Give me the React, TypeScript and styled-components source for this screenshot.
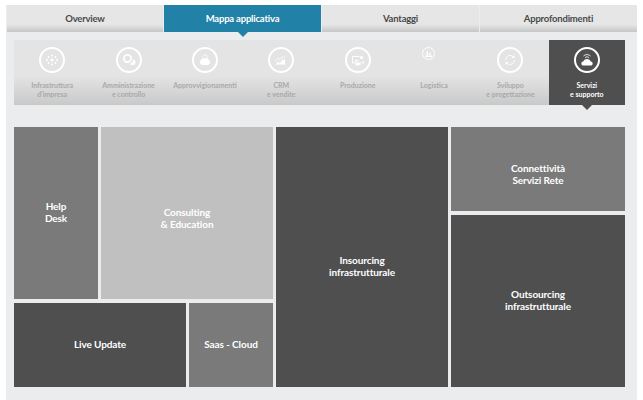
import React from 'react';
import styled, { createGlobalStyle } from 'styled-components';

const GlobalStyle = createGlobalStyle`
  html, body {
    margin: 0;
    padding: 0;
    background: #ffffff;
    font-family: Lato, "Noto Sans", sans-serif;
  }
  * {
    box-sizing: border-box;
  }
`;

const Page = styled.div`
  width: 643px;
  height: 400px;
  padding: 5px 6px 0 6px;
  overflow: hidden;
`;

const Panel = styled.div`
  background: #ebecee;
  height: 395px;
`;

const TabBar = styled.div`
  display: grid;
  grid-template-columns: 156px 157px 157px 1fr;
  gap: 1px;
  height: 27px;
  margin-left: 1px;
`;

const Tab = styled.div<{ $active?: boolean }>`
  position: relative;
  display: flex;
  align-items: center;
  justify-content: center;
  padding-bottom: 1px;
  font-size: 9.5px;
  letter-spacing: -0.2px;
  font-weight: 700;
  color: ${(p) => (p.$active ? '#ffffff' : '#4a4a4a')};
  background: ${(p) =>
    p.$active ? '#2281a6' : 'linear-gradient(#e6e6e6 0%, #e6e6e6 72%, #c6c6c6 100%)'};
`;

const Notch = styled.span<{ $color: string; $top: number }>`
  position: absolute;
  left: 50%;
  top: ${(p) => p.$top}px;
  margin-left: -5px;
  border-left: 5px solid transparent;
  border-right: 5px solid transparent;
  border-top: 5px solid ${(p) => p.$color};
`;

const IconBar = styled.div`
  display: grid;
  grid-template-columns: repeat(8, 1fr);
  margin: 8px 12px 0 8px;
  height: 65px;
  background: linear-gradient(#e4e4e4 0%, #e4e4e4 55%, #c9c9c9 100%);
`;

const Sector = styled.div<{ $active?: boolean }>`
  position: relative;
  display: flex;
  flex-direction: column;
  align-items: center;
  padding-top: 7px;
  background: ${(p) => (p.$active ? '#4f4f4f' : 'transparent')};
`;

const Ring = styled.div<{ $small?: boolean }>`
  display: flex;
  align-items: center;
  justify-content: center;
  flex: none;
  width: ${(p) => (p.$small ? 13 : 26)}px;
  height: ${(p) => (p.$small ? 13 : 26)}px;
  margin-bottom: ${(p) => (p.$small ? 13 : 0)}px;
  margin-right: ${(p) => (p.$small ? 12 : 0)}px;
  border: ${(p) => (p.$small ? 1 : 2)}px solid #ffffff;
  border-radius: 50%;
`;

const SectorLabel = styled.div<{ $active?: boolean }>`
  margin-top: 8px;
  font-size: 7px;
  line-height: 9px;
  font-weight: 700;
  text-align: center;
  white-space: nowrap;
  color: ${(p) => (p.$active ? '#ffffff' : '#a9a9a9')};
`;

const TreeMap = styled.div`
  display: grid;
  grid-template-columns: 84px 85px 84px 172px 174px;
  grid-template-rows: repeat(3, 84px);
  column-gap: 3px;
  row-gap: 4px;
  margin: 22px 0 0 8px;
  width: 611px;
  height: 260px;
`;

const tones = {
  dark: '#4f4f4f',
  mid: '#7a7a7a',
  light: '#c0c0c0',
};

const Tile = styled.div<{ $tone: keyof typeof tones; $col: string; $row: string; $drop: number }>`
  display: flex;
  align-items: center;
  justify-content: center;
  grid-column: ${(p) => p.$col};
  grid-row: ${(p) => p.$row};
  padding: ${(p) => p.$drop}px 4px 2px;
  background: ${(p) => tones[p.$tone]};
  color: #ffffff;
  font-size: 10px;
  letter-spacing: -0.1px;
  line-height: 12px;
  font-weight: 700;
  text-align: center;
`;

const Glyph = ({ children }: { children: React.ReactNode }) => (
  <svg width="14" height="14" viewBox="0 0 14 14" fill="#ffffff">
    {children}
  </svg>
);

const icons: Record<string, React.ReactNode> = {
  infra: (
    <Glyph>
      <circle cx="7" cy="7" r="1.6" />
      {[[7, 2.5], [3.5, 4], [10.5, 4], [2, 7], [12, 7], [3.5, 10], [10.5, 10], [7, 11.500]].map(([x, y]) => (
        <circle key={`${x}-${y}`} cx={x} cy={y} r="0.9" />
      ))}
    </Glyph>
  ),
  admin: (
    <Glyph>
      <path fillRule="evenodd" d="M5.500 1a4.500 4.500 0 1 1 0 9 4.500 4.500 0 0 1 0-9zm0 1.800a2.700 2.700 0 1 0 0 5.400 2.700 2.700 0 0 0 0-5.400z" />
      <path d="M11 6.500a2.800 2.800 0 0 1-.5 5.600c-1.200 0-2.200-.5-2.700-1.400 1.700-.2 3.200-1.700 3.200-4.200z" />
    </Glyph>
  ),
  supply: (
    <Glyph>
      <path d="M2 9.500C2 6.800 4.200 5 7 5s5 1.800 5 4.500c0 1.500-1.200 2.500-2.700 2.500H4.700C3.200 12 2 11 2 9.500z" />
      <path d="M4.500 5c0-2 1-3 2.500-3s2.500 1 2.500 3" fill="none" stroke="#ffffff" strokeWidth="0.8" />
    </Glyph>
  ),
  crm: (
    <Glyph>
      <path d="M1.500 11.500l2.500-3 2 1.500 2.500-3.500 1 1 1.500-2v6z" />
      <path d="M1.500 8l2.500-3 2 1.500 2.500-3 1.500 1 2-2" fill="none" stroke="#ffffff" strokeWidth="0.7" />
    </Glyph>
  ),
  production: (
    <Glyph>
      <path d="M1.500 3.500h7M1.500 3.500v6.500h11V7.500" fill="none" stroke="#ffffff" strokeWidth="0.9" />
      <path d="M5 10h4v1.500h1v.7H4v-.7h1z" />
      <circle cx="10.500" cy="4.500" r="1.600" />
      <path d="M3.500 8.500l1.500-2 1.500 1 1-1v2z" />
    </Glyph>
  ),
  logistics: (
    <svg width="9" height="9" viewBox="0 0 9 9" fill="#ffffff">
      <path d="M1 8V6.500h7V8z" />
      <path d="M2.500 6V2.500h1.500V6zM5 6V4h1.500v2z" />
    </svg>
  ),
  dev: (
    <Glyph>
      <path d="M2.500 7a4.500 4.500 0 0 1 7.700-3.200" fill="none" stroke="#ffffff" strokeWidth="0.9" />
      <path d="M11.500 7a4.500 4.500 0 0 1-7.700 3.200" fill="none" stroke="#ffffff" strokeWidth="0.9" />
      <path d="M11.500 2v3H8.500zM2.500 12V9h3z" />
    </Glyph>
  ),
  support: (
    <Glyph>
      <path d="M3.500 3a5 5 0 0 1 7 0M5 4.600a3 3 0 0 1 4 0" fill="none" stroke="#ffffff" strokeWidth="0.8" />
      <path d="M3.500 12.500a2 2 0 0 1-.3-4A3.800 3.800 0 0 1 7 6a3.800 3.800 0 0 1 3.800 2.500 2 2 0 0 1-.3 4z" />
    </Glyph>
  ),
};

const sectors = [
  { id: 'infra', label: ['Infrastruttura', "d'impresa"] },
  { id: 'admin', label: ['Amministrazione', 'e controllo'] },
  { id: 'supply', label: ['Approvvigionamenti'] },
  { id: 'crm', label: ['CRM', 'e vendite'] },
  { id: 'production', label: ['Produzione'] },
  { id: 'logistics', label: ['Logistica'], small: true },
  { id: 'dev', label: ['Sviluppo', 'e progettazione'] },
  { id: 'support', label: ['Servizi', 'e supporto'], active: true },
];

const tiles = [
  { label: ['Help', 'Desk'], tone: 'mid', col: '1', row: '1 / 3', drop: 0 },
  { label: ['Consulting', '& Education'], tone: 'light', col: '2 / 4', row: '1 / 3', drop: 12 },
  { label: ['Live Update'], tone: 'dark', col: '1 / 3', row: '3', drop: 0 },
  { label: ['Saas - Cloud'], tone: 'mid', col: '3', row: '3', drop: 0 },
  { label: ['Insourcing', 'infrastrutturale'], tone: 'dark', col: '4', row: '1 / 4', drop: 20 },
  { label: ['Connettività', 'Servizi Rete'], tone: 'mid', col: '5', row: '1', drop: 12 },
  { label: ['Outsourcing', 'infrastrutturale'], tone: 'dark', col: '5', row: '2 / 4', drop: 0 },
] as const;

const App = () => (
  <Page>
    <GlobalStyle />
    <Panel>
      <TabBar>
        <Tab>Overview</Tab>
        <Tab $active>
          Mappa applicativa
          <Notch $color="#2281a6" $top={27} />
        </Tab>
        <Tab>Vantaggi</Tab>
        <Tab>Approfondimenti</Tab>
      </TabBar>
      <IconBar>
        {sectors.map((s) => (
          <Sector key={s.id} $active={s.active}>
            <Ring $small={s.small}>{icons[s.id]}</Ring>
            <SectorLabel $active={s.active}>
              {s.label.map((line) => (
                <div key={line}>{line}</div>
              ))}
            </SectorLabel>
            {s.active && <Notch $color="#4f4f4f" $top={65} />}
          </Sector>
        ))}
      </IconBar>
      <TreeMap>
        {tiles.map((t) => (
          <Tile key={t.label[0]} $tone={t.tone} $col={t.col} $row={t.row} $drop={t.drop}>
            <div>
              {t.label.map((line) => (
                <div key={line}>{line}</div>
              ))}
            </div>
          </Tile>
        ))}
      </TreeMap>
    </Panel>
  </Page>
);

export default App;
